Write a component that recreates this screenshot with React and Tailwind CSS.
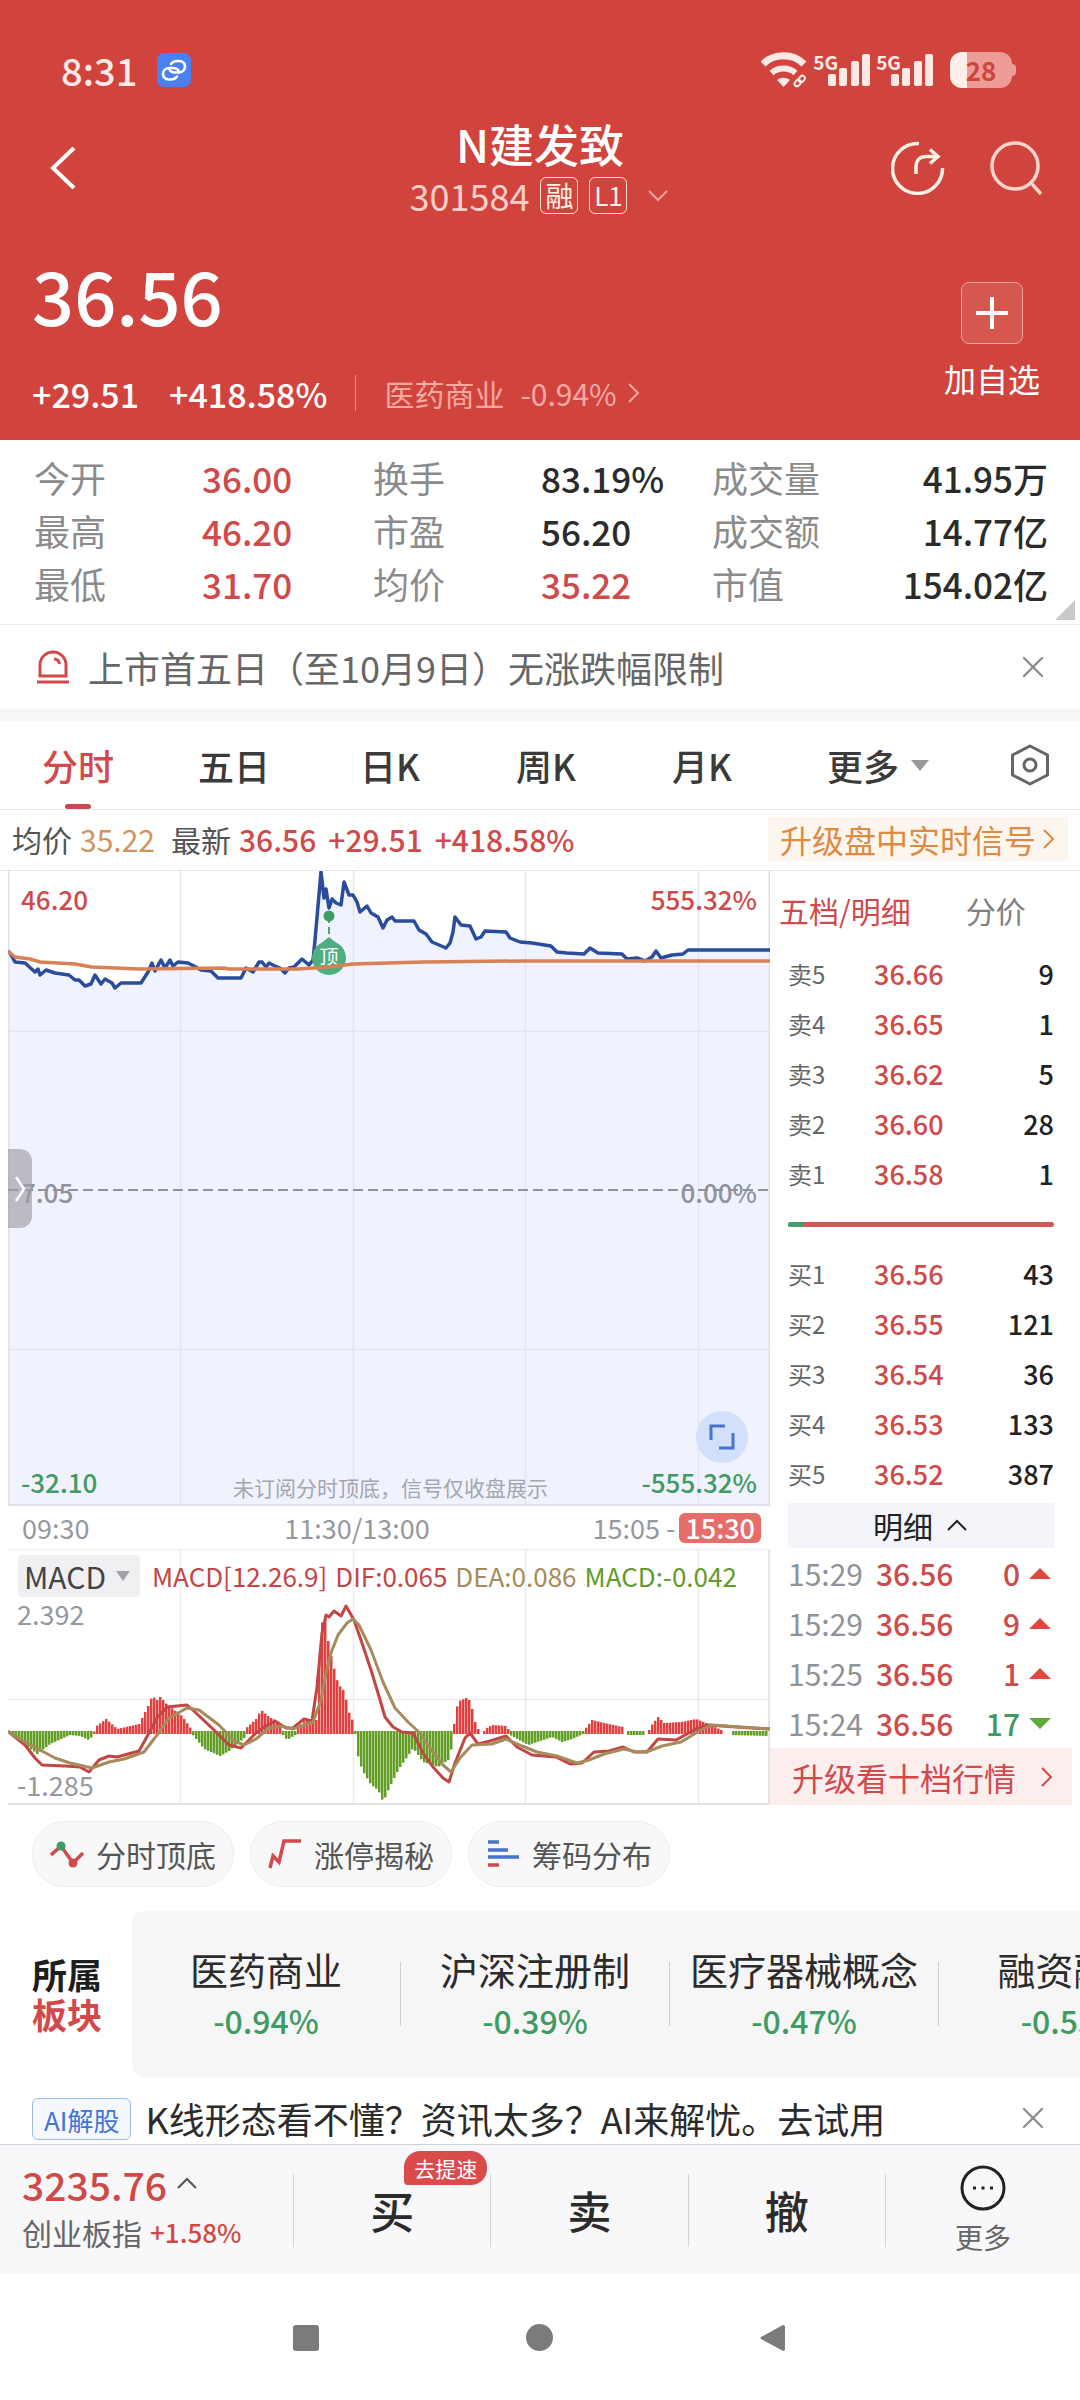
import { X } from 'lucide-react'

const UP = 'text-[#cf4a4b]'
const DOWN = 'text-[#3f9a63]'

const STATS = [
  { label: '今开', value: '36.00', up: true },
  { label: '换手', value: '83.19%' },
  { label: '成交量', value: '41.95万' },
  { label: '最高', value: '46.20', up: true },
  { label: '市盈', value: '56.20' },
  { label: '成交额', value: '14.77亿' },
  { label: '最低', value: '31.70', up: true },
  { label: '均价', value: '35.22', up: true },
  { label: '市值', value: '154.02亿' },
]

const SELLS = [
  ['卖5', '36.66', 9],
  ['卖4', '36.65', 1],
  ['卖3', '36.62', 5],
  ['卖2', '36.60', 28],
  ['卖1', '36.58', 1],
]

const BUYS = [
  ['买1', '36.56', 43],
  ['买2', '36.55', 121],
  ['买3', '36.54', 36],
  ['买4', '36.53', 133],
  ['买5', '36.52', 387],
]

const TICKS = [
  { time: '15:29', price: '36.56', volume: 0, up: true },
  { time: '15:29', price: '36.56', volume: 9, up: true },
  { time: '15:25', price: '36.56', volume: 1, up: true },
  { time: '15:24', price: '36.56', volume: 17, up: false },
]

const SECTORS = [
  { name: '医药商业', change: '-0.94%' },
  { name: '沪深注册制', change: '-0.39%' },
  { name: '医疗器械概念', change: '-0.47%' },
  { name: '融资融券', change: '-0.55%' },
]

const PRICE_LINE =
  '0,80 2,82 7,91 17,92 27,101 30,98 32,104 38,99 47,102 61,104 67,109 71,109 77,115 83,113 87,104 93,113 97,108 104,112 107,117 113,112 133,112 140,101 144,92 147,100 153,89 157,97 162,89 165,95 170,91 180,92 186,95 193,99 203,100 210,107 233,107 238,97 245,101 251,91 254,91 258,96 261,92 267,95 272,97 277,102 281,97 286,96 294,88 301,94 305,89 307,69 313,1 316,27 318,18 321,37 324,28 328,32 333,34 336,11 341,24 345,24 349,31 352,41 359,35 363,42 370,46 375,57 379,49 384,46 387,50 406,50 411,59 418,63 424,71 438,77 442,72 445,61 447,46 453,54 462,55 468,68 473,66 477,60 498,61 502,67 512,71 524,72 543,75 549,81 559,82 576,83 582,77 590,82 614,83 619,88 629,87 637,90 644,86 648,80 653,87 664,84 675,83 680,79 762,79'

const AVG_LINE =
  '0,80 7,86 22,88 32,91 67,93 84,96 131,98 216,97 221,98 290,98 320,96 345,93 415,91 514,90 762,90'

const DIF_LINE =
  '0,181 2,183 17,195 27,208 34,215 57,216 72,217 81,222 91,210 101,206 109,207 131,201 141,183 149,168 159,157 179,155 188,163 206,180 221,195 233,198 248,183 256,177 267,171 278,178 285,178 296,169 304,171 309,137 314,83 318,65 321,67 326,61 333,66 338,56 346,70 354,93 363,120 370,143 377,167 385,177 394,182 405,183 415,203 425,217 435,228 441,232 447,213 457,188 462,183 470,194 482,191 498,186 509,197 524,205 548,207 562,214 574,213 586,202 601,201 615,197 626,202 639,202 650,189 668,190 688,179 701,175 728,177 762,179'

const DEA_LINE =
  '0,181 2,183 17,192 32,200 47,208 62,213 84,218 101,212 116,209 136,202 149,185 161,168 179,158 191,160 211,175 226,191 236,195 248,189 261,178 273,176 285,179 305,172 313,150 318,123 323,103 330,85 339,73 345,69 351,75 363,100 375,132 387,158 400,172 412,183 422,198 435,215 443,222 452,208 464,195 484,194 498,189 514,196 529,202 549,206 569,213 581,210 596,204 616,199 629,202 641,201 654,196 673,192 693,180 703,175 762,179'

// histogram turning points: [x, height], negative is below the zero line
const HISTOGRAM = [
  [2, -2], [12, -9], [29, -22], [42, -12], [62, -3], [72, -4], [81, -8], [85, -3], [87, 6], [98, 14],
  [109, 4], [131, 9], [141, 29], [144, 37], [149, 33], [153, 37], [156, 31], [166, 23], [174, 17], [183, 4],
  [184, -2], [196, -17], [212, -24], [221, -19], [236, -6], [237, 4], [248, 14], [253, 23], [261, 16],
  [271, 11], [274, 3], [275, -3], [279, -8], [287, -3], [289, 4], [298, 14], [308, 13], [310, 52],
  [313, 109], [318, 117], [320, 92], [324, 72], [330, 49], [336, 42], [339, 29], [342, 16], [345, 12],
  [347, -2], [349, -21], [354, -38], [363, -53], [370, -58], [375, -70], [381, -56], [390, -38],
  [405, -16], [415, -30], [430, -35], [440, -28], [444, -14], [445, -3], [447, 21], [451, 32],
  [460, 36], [464, 24], [467, 11], [470, 4], [471, 0], [475, 0], [477, 4], [484, 8], [498, 7], [500, 4],
  [502, -3], [520, -13], [544, -5], [554, -10], [564, -7], [575, -2], [577, 4], [584, 13], [596, 10],
  [615, 6], [617, 0], [620, -3], [637, -3], [638, 0], [640, 0], [642, 6], [650, 16], [656, 10], [673, 11], [688, 14],
  [698, 10], [713, 3], [714, 0], [722, 0], [723, -3], [761, -4],
]

function heightAt(x) {
  const i = HISTOGRAM.findIndex(([px]) => px >= x)
  if (i <= 0) return HISTOGRAM[0][1]
  const [x0, h0] = HISTOGRAM[i - 1]
  const [x1, h1] = HISTOGRAM[i]
  return h0 + ((h1 - h0) * (x - x0)) / (x1 - x0)
}

const BARS = Array.from({ length: 253 }, (_, i) => ({ x: 2 + i * 3, h: heightAt(2 + i * 3) }))

const CHEVRONS = {
  right: 'M8 3l9 9-9 9',
  up: 'M3 16l9-9 9 9',
  down: 'M3 8l9 9 9-9',
}

function Chevron({ dir, className }) {
  return (
    <svg viewBox="0 0 24 24" fill="none" stroke="currentColor" strokeWidth="2" className={className} aria-hidden="true">
      <path d={CHEVRONS[dir]} />
    </svg>
  )
}

function Signal() {
  return (
    <div className="flex items-start">
      <span className="text-[19px] leading-4 font-bold">5G</span>
      <svg viewBox="0 0 42 32" className="-ml-[10px] h-8 w-[42px]" fill="currentColor" aria-hidden="true">
        <rect x="0" y="20" width="8" height="12" rx="2" />
        <rect x="11" y="14" width="8" height="18" rx="2" />
        <rect x="23" y="7" width="8" height="25" rx="2" />
        <rect x="34" y="0" width="8" height="32" rx="2" />
      </svg>
    </div>
  )
}

function StatusBar() {
  return (
    <div className="flex h-11 items-center justify-between pl-[61px] pr-16 text-[#ffe9e4]">
      <div className="flex items-center gap-5">
        <span className="text-[38px] leading-10 font-medium">8:31</span>
        <svg viewBox="0 0 34 34" className="size-[34px]" fill="none" aria-hidden="true">
          <rect width="34" height="34" rx="7" fill="#4a80f0" />
          <g stroke="#fff" strokeWidth="2.6" strokeLinecap="round">
            <path d="M14 11c1.500-2 3.500-3 6-3h2c8 0 8 11 0 11.500h-4c-3 0-5-1.500-6-3.500" />
            <path d="M20 23.500c-1.500 2-3.500 3-6 3h-2C4 26.500 4 15.500 12 15h4c3 0 5 1.500 6 3.500" />
          </g>
        </svg>
      </div>
      <div className="flex items-center gap-[6px]">
        <svg viewBox="0 0 46 36" className="h-9 w-[46px]" fill="none" stroke="currentColor" aria-hidden="true">
          <path d="M2 12C13 1 32 1 43 12" strokeWidth="7" />
          <path d="M10.500 21C17 15 28 15 34.500 21" strokeWidth="6" />
          <path d="M16 28c4-3 9-3 13 0l-6.500 7z" fill="currentColor" stroke="none" />
          <g strokeWidth="2">
            <rect x="33" y="29" width="7" height="5" rx="2.500" transform="rotate(-50 36 31)" />
            <rect x="37" y="25" width="7" height="5" rx="2.500" transform="rotate(-50 40 27)" />
          </g>
        </svg>
        <Signal />
        <Signal />
        <div className="ml-[11px] flex items-center">
          <div className="flex h-9 w-[62px] items-center justify-center rounded-xl bg-linear-to-r from-[#ffeeea] from-28% to-[#ee9c98] to-28% text-[26px] leading-9 font-bold text-[#d0443d]">
            28
          </div>
          <div className="h-[12px] w-1 rounded-r-full bg-[#ee9c98]" />
        </div>
      </div>
    </div>
  )
}

function Header() {
  return (
    <header className="bg-[#d0443d] pt-12 pb-[22px] text-white">
      <StatusBar />
      <div className="grid grid-cols-[1fr_auto_1fr] pt-7">
        <button type="button" aria-label="返回" className="flex h-24 w-24 items-center pl-[49px]">
          <svg viewBox="0 0 28 44" className="h-11 w-7" fill="none" stroke="currentColor" strokeWidth="4" aria-hidden="true">
            <path d="M25 2L4 22l21 20" />
          </svg>
        </button>
        <div className="flex flex-col items-center">
          <h1 className="text-[45px] leading-[48px] font-medium">N建发致</h1>
          <div className="flex h-[54px] items-center gap-[11px] text-[#ffcfc9]">
            <span className="text-[36px]">301584</span>
            <span className="flex h-[37px] w-[38px] items-center justify-center rounded-md border border-[#ffe0d0] text-[28px] leading-none text-[#fff0e6]">融</span>
            <span className="flex h-[37px] w-[38px] items-center justify-center rounded-md border border-[#ffe0d0] text-[26px] leading-none text-[#fff0e6]">L1</span>
            <Chevron dir="down" className="ml-2 size-6 text-[#f0a19b]" />
          </div>
        </div>
        <div className="flex h-24 items-center justify-end gap-[45px] pr-[36px]">
          <button type="button" aria-label="分享">
            <svg viewBox="0 0 54 54" className="size-[54px]" fill="none" stroke="#fff0e4" strokeWidth="3.500" aria-hidden="true">
              <path d="M28 2.500A25 25 0 1 0 51.500 27" />
              <path d="M25 33v-7c0-7 4-10.500 10-10.500h10M39 8.500l8 7-8 7" />
            </svg>
          </button>
          <button type="button" aria-label="搜索">
            <svg viewBox="0 0 54 54" className="size-[54px]" fill="none" stroke="#ffd3ce" strokeWidth="3.500" aria-hidden="true">
              <circle cx="25" cy="25" r="23" />
              <path d="M42 43l9 10" />
            </svg>
          </button>
        </div>
      </div>
      <div className="flex justify-between px-8 pt-8">
        <div>
          <p className="text-[74px] leading-20 font-medium">36.56</p>
          <div className="mt-[34px] flex h-[50px] items-center text-[34px] font-medium">
            <span>+29.51</span>
            <span className="ml-[30px]">+418.58%</span>
            <span className="mx-7 h-9 w-px bg-[#e88f89]" />
            <a href="#sector" className="flex items-center text-[30px] font-normal text-[#f4a9a3]">
              医药商业<span className="ml-4">-0.94%</span>
              <Chevron dir="right" className="ml-1 size-6" />
            </a>
          </div>
        </div>
        <button type="button" className="flex flex-col items-center pt-7 pr-2">
          <span className="flex size-[62px] items-center justify-center rounded-lg border border-[#f0a19b] bg-white/10">
            <svg viewBox="0 0 32 32" className="size-8" stroke="currentColor" strokeWidth="4" aria-hidden="true">
              <path d="M16 0v32M0 16h32" />
            </svg>
          </span>
          <span className="mt-3 text-[32px] leading-11">加自选</span>
        </button>
      </div>
    </header>
  )
}

function Stats() {
  return (
    <div className="relative border-b border-[#ececec] pt-[11px] pb-[14px]">
      <dl className="grid grid-cols-[339fr_339fr_336fr] pr-8 pl-[34px] leading-[53px]">
        {STATS.map(({ label, value, up }, i) => (
          <div key={label} className={i % 3 === 2 ? 'flex justify-between' : 'flex'}>
            <dt className={i % 3 === 2 ? 'text-[36px] text-[#8b8b8b]' : 'w-[168px] text-[36px] text-[#8b8b8b]'}>{label}</dt>
            <dd className={up ? `text-[35px] font-medium ${UP}` : 'text-[35px] font-medium text-[#2b2b2b]'}>{value}</dd>
          </div>
        ))}
      </dl>
      <svg viewBox="0 0 20 20" className="absolute right-[5px] bottom-1 size-5" fill="#c9c9c9" aria-hidden="true">
        <path d="M20 0v20H0z" />
      </svg>
    </div>
  )
}

function Notice() {
  return (
    <div className="flex h-[84px] items-center pr-[29px] pl-9">
      <svg viewBox="0 0 34 34" className="size-[34px]" fill="none" stroke="#d2494c" strokeWidth="3" aria-hidden="true">
        <path d="M4 26V15a13 13 0 0 1 26 0v11z" />
        <path d="M1 32h32M18 9c3 0 5 2 5.500 5" />
      </svg>
      <p className="ml-[18px] flex-1 text-[36px] text-[#666]">上市首五日（至10月9日）无涨跌幅限制</p>
      <button type="button" aria-label="关闭">
        <X className="size-9 text-[#8c8c8c]" strokeWidth={1.5} />
      </button>
    </div>
  )
}

function PeriodTabs() {
  return (
    <nav className="grid grid-cols-[repeat(6,156fr)_144fr] border-b border-[#e6e6e6] text-[36px] leading-[88px] font-medium text-[#3a3a3a]">
      <button type="button" className="relative text-[#d2494c]">
        分时
        <span className="absolute bottom-0 left-1/2 h-[5px] w-[26px] -translate-x-1/2 rounded-full bg-[#cb4650]" />
      </button>
      <button type="button">五日</button>
      <button type="button">日K</button>
      <button type="button">周K</button>
      <button type="button">月K</button>
      <button type="button" className="flex items-center justify-center gap-3 pl-10">
        更多
        <svg viewBox="0 0 18 11" className="h-[11px] w-[18px]" fill="#9a9a9a" aria-hidden="true">
          <path d="M0 0h18l-9 11z" />
        </svg>
      </button>
      <button type="button" aria-label="设置" className="flex items-center justify-end pr-[30px]">
        <svg viewBox="0 0 40 42" className="h-[42px] w-10" fill="none" stroke="#666" strokeWidth="3" strokeLinejoin="round" aria-hidden="true">
          <path d="M20 2l17.500 9v20L20 40 2.500 31V11z" />
          <circle cx="20" cy="21" r="6" />
        </svg>
      </button>
    </nav>
  )
}

function QuoteLine() {
  return (
    <div className="flex h-[61px] items-center border-b border-[#e8e8e8] pr-3 pb-[2px] pl-3 text-[30px]">
      <span className="text-[#555]">均价</span>
      <span className="ml-2 text-[#d2935c]">35.22</span>
      <span className="ml-4 text-[#555]">最新</span>
      <span className={`ml-2 font-medium ${UP}`}>36.56</span>
      <span className={`ml-3 font-medium ${UP}`}>+29.51</span>
      <span className={`ml-3 font-medium ${UP}`}>+418.58%</span>
      <a href="#signal" className="ml-auto flex h-11 items-center bg-[#fdf6ee] pr-2 pl-3 text-[32px] text-[#dd8a42]">
        升级盘中实时信号
        <Chevron dir="right" className="size-6" />
      </a>
    </div>
  )
}

function PriceChart() {
  return (
    <div className="relative text-[26px] leading-8 font-medium">
      <svg viewBox="0 0 762 635" className="block w-full" fill="none" role="img" aria-label="分时走势">
        <polygon points={`0,635 ${PRICE_LINE} 762,635`} fill="#f0f3fe" />
        <path d="M172.500 0v635M345.500 0v635M517.500 0v635M690.500 0v635M0 160.500h762M0 478.500h762" stroke="#e2e5ee" strokeWidth="1.500" />
        <path d="M.5 0v634h761V0" stroke="#dfe2ea" strokeWidth="2" />
        <path d="M0 319h762" stroke="#8f939d" strokeWidth="2" strokeDasharray="10 5" />
        <polyline points={PRICE_LINE} stroke="#2b4c9b" strokeWidth="3.500" strokeLinejoin="round" />
        <path d="M321 45v28" stroke="#4da374" strokeWidth="2" strokeDasharray="7 4" />
        <circle cx="321" cy="45" r="5.500" fill="#3d9e63" />
        <path d="M321 66l7 5.500a17 17 0 1 1-14 0z" fill="#4fae80" />
        <text x="321" y="93" textAnchor="middle" fontSize="19" fontWeight="400" fill="#fff">顶</text>
        <polyline points={AVG_LINE} stroke="#d88155" strokeWidth="3.500" strokeLinejoin="round" />
      </svg>
      <span className={`absolute top-3 left-[13px] ${UP}`}>46.20</span>
      <span className={`absolute top-3 right-[13px] ${UP}`}>555.32%</span>
      <span className="absolute top-[305px] left-[13px] text-[#8f939d]">7.05</span>
      <span className="absolute top-[305px] right-[13px] text-[#8f939d]">0.00%</span>
      <span className={`absolute bottom-2 left-[13px] ${DOWN}`}>-32.10</span>
      <span className={`absolute right-[13px] bottom-2 ${DOWN}`}>-555.32%</span>
      <span className="absolute bottom-[3px] left-[225px] text-[21px] font-normal text-[#a3a6ae]">未订阅分时顶底，信号仅收盘展示</span>
      <button type="button" aria-label="展开侧栏" className="absolute top-[278px] left-0 flex h-[79px] w-6 items-center justify-center rounded-r-xl bg-[#9c9ca4]/65 text-white">
        <svg viewBox="0 0 12 28" className="h-7 w-3" fill="none" stroke="currentColor" strokeWidth="2.500" aria-hidden="true">
          <path d="M2 2l8 12-8 12" />
        </svg>
      </button>
      <button type="button" aria-label="全屏" className="absolute right-[22px] bottom-[43px] flex size-[52px] items-center justify-center rounded-full bg-[#d3e0fa]">
        <svg viewBox="0 0 26 26" className="size-[26px]" fill="none" stroke="#4773cc" strokeWidth="3" aria-hidden="true">
          <path d="M16 2H2v14M10 24h14V9" />
        </svg>
      </button>
    </div>
  )
}

function TimeAxis() {
  return (
    <div className="grid h-11 grid-cols-3 items-center border-b border-[#ececec] pr-[9px] pl-[14px] text-[27px] leading-[30px] text-[#95989e]">
      <span>09:30</span>
      <span className="pl-4">11:30/13:00</span>
      <span className="flex items-center justify-end gap-1">
        15:05 -<span className="rounded-md bg-[#e66e6a] px-[6px] font-medium text-white">15:30</span>
      </span>
    </div>
  )
}

function MacdChart() {
  return (
    <div className="relative">
      <svg viewBox="0 0 762 255" className="block w-full" fill="none" role="img" aria-label="MACD">
        <path d="M172.500 0v255M345.500 0v255M517.500 0v255M690.500 0v255M0 149.500h762" stroke="#ececf0" strokeWidth="1.500" />
        <path d="M0 254h762M761 0v254" stroke="#e4e4e8" strokeWidth="2" />
        {BARS.filter(({ h }) => Math.abs(h) > 1).map(({ x, h }) => (
          <rect
            key={x}
            x={x - 1}
            y={h > 0 ? 183 - h : 181}
            width="2.500"
            height={Math.abs(h) + 1}
            fill={h > 0 ? '#e0403f' : '#629d24'}
          />
        ))}
        <polyline points={DIF_LINE} stroke="#c34544" strokeWidth="3" strokeLinejoin="round" />
        <polyline points={DEA_LINE} stroke="#a68c5c" strokeWidth="3" strokeLinejoin="round" />
      </svg>
      <div className="absolute top-[5px] left-[10px] flex items-center">
        <div className="relative">
          <select aria-label="指标" className="h-[42px] w-[122px] appearance-none rounded-sm bg-[#f0f0f2] pl-[6px] text-[30px] leading-[42px] text-[#444]">
            <option>MACD</option>
            <option>KDJ</option>
          </select>
          <svg viewBox="0 0 14 10" className="pointer-events-none absolute top-4 right-[10px] h-[10px] w-[14px]" fill="#a2a2a6" aria-hidden="true">
            <path d="M0 0h14L7 10z" />
          </svg>
        </div>
        <p className="ml-3 flex gap-2 text-[26px] leading-[42px] whitespace-nowrap">
          <span className="text-[#c34544]">MACD[12.26.9]</span>
          <span className="text-[#c34544]">DIF:0.065</span>
          <span className="text-[#a68c5c]">DEA:0.086</span>
          <span className="text-[#639a2c]">MACD:-0.042</span>
        </p>
      </div>
      <span className="absolute top-12 left-[9px] text-[27px] leading-8 text-[#95989e]">2.392</span>
      <span className="absolute bottom-1 left-[9px] text-[27px] leading-8 text-[#95989e]">-1.285</span>
    </div>
  )
}

function BookTable({ rows, label }) {
  return (
    <table className="w-full table-fixed text-[27px] font-medium" aria-label={label}>
      <tbody>
        {rows.map(([level, price, volume]) => (
          <tr key={level} className="h-[50px]">
            <th scope="row" className="w-[86px] text-left text-[24px] font-normal text-[#666]">{level}</th>
            <td className={UP}>{price}</td>
            <td className="w-20 text-right text-[#222]">{volume}</td>
          </tr>
        ))}
      </tbody>
    </table>
  )
}

function OrderBook() {
  return (
    <div className="flex flex-col">
      <div className="flex h-[78px] items-center gap-[55px] pl-[9px] text-[30px]">
        <button type="button" className={UP}>五档/明细</button>
        <button type="button" className="text-[#808080]">分价</button>
      </div>
      <div className="px-[18px]">
        <BookTable rows={SELLS} label="卖盘" />
        <div className="flex h-[50px] items-center">
          <div className="flex h-[5px] w-full overflow-hidden rounded-full bg-[#cf5955]">
            <div className="w-4 bg-[#43a06c]" />
          </div>
        </div>
        <BookTable rows={BUYS} label="买盘" />
        <button type="button" className="mt-1 flex h-[45px] w-full items-center justify-center gap-3 bg-[#f4f5fa] text-[30px] text-[#222]">
          明细
          <Chevron dir="up" className="size-6" />
        </button>
        <table className="w-full table-fixed text-[30px]" aria-label="成交明细">
          <tbody>
            {TICKS.map(({ time, price, volume, up }, i) => (
              <tr key={i} className="h-[50px]">
                <td className="w-[88px] text-[#8f9296]">{time}</td>
                <td className={`w-[80px] font-medium ${UP}`}>{price}</td>
                <td className={`text-right font-medium ${up ? UP : DOWN}`}>{volume}</td>
                <td className="w-[34px]">
                  <svg viewBox="0 0 22 11" className="ml-[9px] h-[11px] w-[22px]" fill={up ? '#e0483f' : '#5fa83a'} aria-hidden="true">
                    <path d={up ? 'M11 0l11 11H0z' : 'M0 0h22L11 11z'} />
                  </svg>
                </td>
              </tr>
            ))}
          </tbody>
        </table>
      </div>
      <a href="#level2" className="flex flex-1 items-center justify-between bg-[#fdeeee] pr-[14px] pl-[22px] text-[32px] leading-[54px] text-[#d2494c]">
        升级看十档行情
        <Chevron dir="right" className="size-6" />
      </a>
    </div>
  )
}

function ToolChip({ label, children }) {
  return (
    <button type="button" className="flex h-[66px] w-[202px] items-center justify-center gap-3 rounded-full border border-[#ededed] bg-[#f8f8f8] text-[30px] text-[#555]">
      <svg viewBox="0 0 34 34" className="size-[34px]" fill="none" strokeWidth="3.500" aria-hidden="true">
        {children}
      </svg>
      {label}
    </button>
  )
}

function ToolChips() {
  return (
    <div className="flex gap-4 px-8 pt-4">
      <ToolChip label="分时顶底">
        <path d="M1 18l10-9 12 17 10-10" stroke="#d24a4f" />
        <circle cx="11" cy="9" r="4.500" fill="#3f9a63" />
        <circle cx="23" cy="26" r="4.500" fill="#d24a4f" />
      </ToolChip>
      <ToolChip label="涨停揭秘">
        <path d="M2 31l3-12 6 6 5-21h17" stroke="#d24a4f" />
      </ToolChip>
      <ToolChip label="筹码分布">
        <path d="M2 5h11M2 13h20M2 20h31" stroke="#4773cc" />
        <path d="M2 28h11" stroke="#d24a4f" />
      </ToolChip>
    </div>
  )
}

function Sectors() {
  return (
    <section id="sector" className="mt-6 flex items-center overflow-hidden">
      <h2 className="w-[132px] shrink-0 pl-8 text-[35px] leading-10 font-bold text-[#1d1d1d]">
        所属
        <br />
        <span className="text-[#d2494c]">板块</span>
      </h2>
      <ul className="flex shrink-0 rounded-l-xl bg-[#f6f6f6] py-[34px]">
        {SECTORS.map(({ name, change }, i) => (
          <li key={name} className="flex w-[269px] items-center">
            <div className="flex-1 text-center whitespace-nowrap">
              <p className="text-[38px] leading-[48px] text-[#2b2b2b]">{name}</p>
              <p className={`mt-1 text-[32px] leading-[46px] font-medium ${DOWN}`}>{change}</p>
            </div>
            {i < SECTORS.length - 1 && <span className="h-16 w-px bg-[#cfcfcf]" />}
          </li>
        ))}
      </ul>
    </section>
  )
}

function AiBanner() {
  return (
    <div className="flex h-[68px] items-end border-b border-[#d0d3d6] pr-[29px] pb-1 pl-8">
      <span className="flex h-[42px] items-center rounded-md border border-[#9dbbe8] bg-[#f5f9ff] px-[11px] text-[26px] text-[#3f74d8]">AI解股</span>
      <a href="#ai" className="ml-[14px] flex-1 text-[36px] leading-[44px] text-[#2b2b2b]">
        K线形态看不懂？资讯太多？AI来解忧。去试用
      </a>
      <button type="button" aria-label="关闭" className="mb-1">
        <X className="size-9 text-[#8c8c8c]" strokeWidth={1.5} />
      </button>
    </div>
  )
}

function TradeBar() {
  return (
    <footer className="flex h-[130px] items-center bg-[#f8f8fa]">
      <button type="button" className="w-[293px] pb-[6px] pl-[22px] text-left whitespace-nowrap">
        <span className="flex items-center gap-2 text-[39px] leading-[50px] font-medium text-[#cf4a45]">
          3235.76
          <Chevron dir="up" className="size-6 text-[#555]" />
        </span>
        <span className="flex items-center gap-2 text-[30px] leading-[46px] text-[#666]">
          创业板指<span className="text-[26px] font-medium text-[#cf4a45]">+1.58%</span>
        </span>
      </button>
      <div className="flex h-[73px] flex-1 items-center divide-x divide-[#d3d3d6] border-x border-[#d3d3d6] text-[44px] font-medium text-[#2b2b2b]">
        <button type="button" className="relative h-full flex-1">
          买
          <span className="absolute right-[3px] bottom-[62px] rounded-t-2xl rounded-br-2xl rounded-bl-sm bg-[#db4b4c] px-[10px] text-[21px] leading-[34px] font-normal text-white">
            去提速
          </span>
        </button>
        <button type="button" className="h-full flex-1">卖</button>
        <button type="button" className="h-full flex-1">撤</button>
      </div>
      <button type="button" className="flex w-[194px] flex-col items-center gap-1 pt-1 text-[28px] leading-11 text-[#666]">
        <svg viewBox="0 0 46 46" className="size-[46px]" fill="none" stroke="#222" strokeWidth="3" aria-hidden="true">
          <circle cx="23" cy="23" r="21" />
          <path d="M13 23h3M21.500 23h3M30 23h3" />
        </svg>
        更多
      </button>
    </footer>
  )
}

function SystemNav() {
  return (
    <div className="flex h-[125px] items-center justify-center gap-[207px] pr-[2px] text-[#7b7b7b]">
      <button type="button" aria-label="最近任务" className="size-[26px] rounded-[3px] bg-current" />
      <button type="button" aria-label="主屏幕" className="size-[27px] rounded-full bg-current" />
      <button type="button" aria-label="返回">
        <svg viewBox="0 0 25 28" className="h-7 w-[25px]" fill="currentColor" aria-hidden="true">
          <path d="M23 1q2 0 2 2v22q0 2-2 2L1 15q-1-1 0-2z" />
        </svg>
      </button>
    </div>
  )
}

export default function App() {
  return (
    <div className="min-h-screen bg-white font-['Noto_Sans_CJK_SC',sans-serif]">
      <Header />
      <Stats />
      <Notice />
      <div className="h-3 bg-[#f6f6f6]" />
      <PeriodTabs />
      <QuoteLine />
      <main className="grid grid-cols-[762fr_302fr] px-2">
        <div>
          <PriceChart />
          <TimeAxis />
          <MacdChart />
        </div>
        <OrderBook />
      </main>
      <ToolChips />
      <Sectors />
      <AiBanner />
      <TradeBar />
      <SystemNav />
    </div>
  )
}
